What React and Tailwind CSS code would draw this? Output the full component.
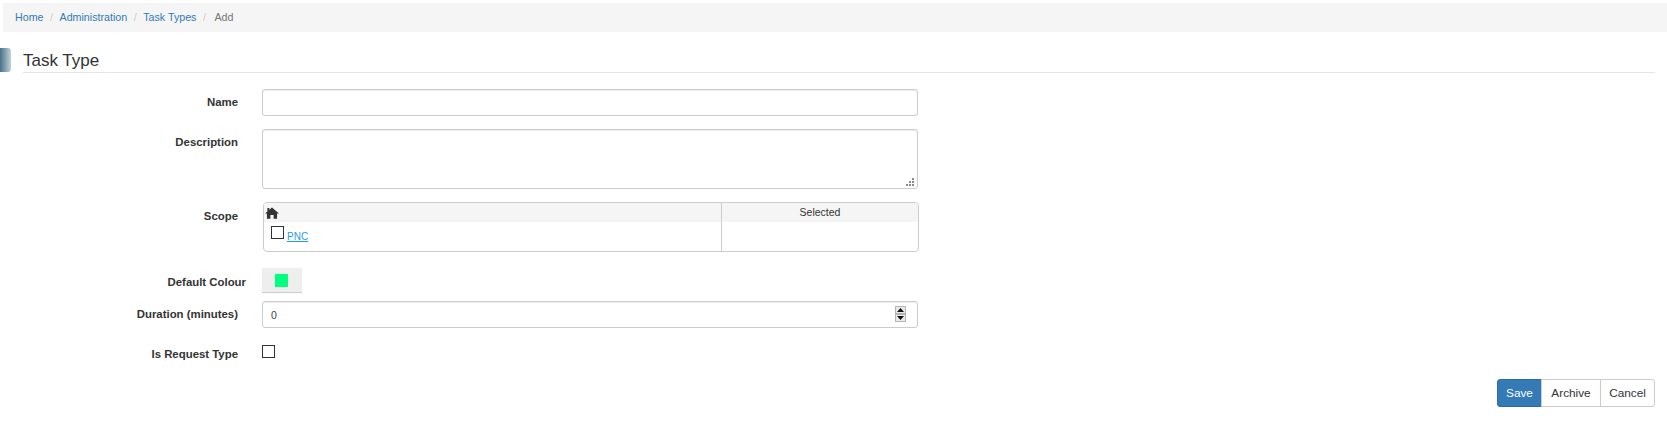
import React from "react";

function Label({ children, className = "w-[238px]" }) {
  return (
    <label className={`shrink-0 text-right text-[11.4px] font-bold leading-[17px] text-[#333] ${className}`}>
      {children}
    </label>
  );
}

function Box({ className = "" }) {
  return <input type="checkbox" className={`m-0 block h-[13px] w-[13px] appearance-none rounded-none border border-[#333] bg-white ${className}`} />;
}

function Sep() {
  return <span className="px-[6.5px] text-[#ccc]">/</span>;
}

export default function App() {
  return (
    <div className="h-[428px] overflow-hidden bg-white font-['Liberation_Sans',Arial,sans-serif] text-[12px] text-[#333]">
      <nav className="ml-[3px] mt-[3px] flex h-[29px] items-center bg-[#f5f5f5] pl-[12px] text-[10.7px]">
        <a className="text-[#337ab7]">Home</a>
        <Sep />
        <a className="text-[#337ab7]">Administration</a>
        <Sep />
        <a className="text-[#337ab7]">Task Types</a>
        <Sep />
        <span className="ml-[2px] text-[#777]">Add</span>
      </nav>

      <div className="relative pl-[23px] pr-[12px]">
        <div className="absolute left-0 top-[8px] h-[24px] w-[11px] rounded-r-[3px] bg-gradient-to-r from-[#4a7389] to-[#c3d2da]" />
        <h1 className="mt-[8px] border-b border-[#e5e5e5] pb-[1px] pt-[11px] text-[17px] font-normal leading-[20px] text-[#333]">Task Type</h1>
      </div>

      <form className="mt-[16px] flex flex-col">
        <div className="flex items-center">
          <Label>Name</Label>
          <input className="ml-[24px] h-[27px] w-[656px] rounded-[3px] border border-[#ccc] bg-white px-[8px] shadow-[inset_0_1px_1px_rgba(0,0,0,0.075)] outline-none" />
        </div>

        <div className="mt-[13px] flex items-start">
          <Label className="w-[238px] pt-[5px]">Description</Label>
          <div className="relative ml-[24px] h-[60px] w-[656px]">
            <textarea className="block h-full w-full resize-none rounded-[3px] border border-[#ccc] bg-white px-[8px] shadow-[inset_0_1px_1px_rgba(0,0,0,0.075)] outline-none" />
            <svg width="8" height="8" viewBox="0 0 8 8" className="absolute bottom-[3px] right-[4px]" fill="#8a8a8a">
              <rect x="6" y="0" width="2" height="2" />
              <rect x="3" y="3" width="2" height="2" />
              <rect x="6" y="3" width="2" height="2" />
              <rect x="0" y="6" width="2" height="2" />
              <rect x="3" y="6" width="2" height="2" />
              <rect x="6" y="6" width="2" height="2" />
            </svg>
          </div>
        </div>

        <div className="mt-[13px] flex items-start">
          <Label className="w-[238px] pt-[6px]">Scope</Label>
          <div className="ml-[25px] flex h-[50px] w-[656px] overflow-hidden rounded-[4px] border border-[#ccc]">
            <div className="flex-1 border-r border-[#ccc]">
              <div className="flex h-[19px] items-center bg-[#f5f5f5] pl-[1px]">
                <svg width="14" height="12" viewBox="0 0 13 12" preserveAspectRatio="none" className="text-[#333]" fill="currentColor">
                  <path d="M6.5 0.5 L13 6.6 L11.2 6.6 L11.2 11.8 L8 11.8 L8 8 L5 8 L5 11.8 L1.8 11.8 L1.8 6.6 L0 6.6 L2.2 4.5 L2.2 1 L4 1 L4 2.8 Z" />
                </svg>
              </div>
              <div className="flex items-start pl-[7px] pt-[4px]">
                <Box />
                <a className="ml-[3px] mt-[4px] text-[10px] leading-[13px] text-[#1f9cec] underline">PNC</a>
              </div>
            </div>
            <div className="w-[196px] shrink-0">
              <div className="flex h-[19px] items-center justify-center bg-[#f5f5f5] pt-[1px] text-[10.5px]">Selected</div>
            </div>
          </div>
        </div>

        <div className="mt-[16px] flex items-center">
          <Label className="w-[246px] pt-[3px]">Default Colour</Label>
          <div className="ml-[16px] flex h-[25px] w-[40px] items-center justify-center border-b border-[#ccc] bg-[#eee] pr-[1px]">
            <div className="h-[13px] w-[13px] bg-[#00ff7f]" />
          </div>
        </div>

        <div className="mt-[8px] flex items-center">
          <Label>Duration (minutes)</Label>
          <div className="relative ml-[24px] h-[27px] w-[656px]">
            <input defaultValue="0" className="h-full w-full rounded-[3px] border border-[#ccc] bg-white pl-[8px] pr-[8px] text-[10.5px] text-[#444] shadow-[inset_0_1px_1px_rgba(0,0,0,0.075)] outline-none" />
            <div className="absolute right-[12px] top-[5px] flex h-[16px] w-[11px] flex-col">
              <div className="flex h-[8px] items-center justify-center border border-[#b5b5b5] bg-[#eaeaea]">
                <svg width="7" height="4" viewBox="0 0 7 4"><path d="M3.5 0 L7 4 L0 4 Z" fill="#111" /></svg>
              </div>
              <div className="flex h-[8px] items-center justify-center border border-[#b5b5b5] bg-[#eaeaea]">
                <svg width="7" height="4" viewBox="0 0 7 4"><path d="M0 0 L7 0 L3.5 4 Z" fill="#111" /></svg>
              </div>
            </div>
          </div>
        </div>

        <div className="mt-[17px] flex items-start">
          <Label className="w-[238px] pt-[1px]">Is Request Type</Label>
          <Box className="ml-[24px]" />
        </div>

        <div className="mt-[16px] flex justify-end pr-[12px]">
          <div className="flex h-[28px] text-[11.8px]">
            <button type="button" className="w-[45px] rounded-l-[3px] border border-[#2e6da4] bg-[#337ab7] pt-[1px] text-white">Save</button>
            <button type="button" className="-ml-px w-[60px] border border-[#ccc] bg-white pt-[1px]">Archive</button>
            <button type="button" className="-ml-px w-[55px] rounded-r-[3px] border border-[#ccc] bg-white pt-[1px]">Cancel</button>
          </div>
        </div>
      </form>
    </div>
  );
}
